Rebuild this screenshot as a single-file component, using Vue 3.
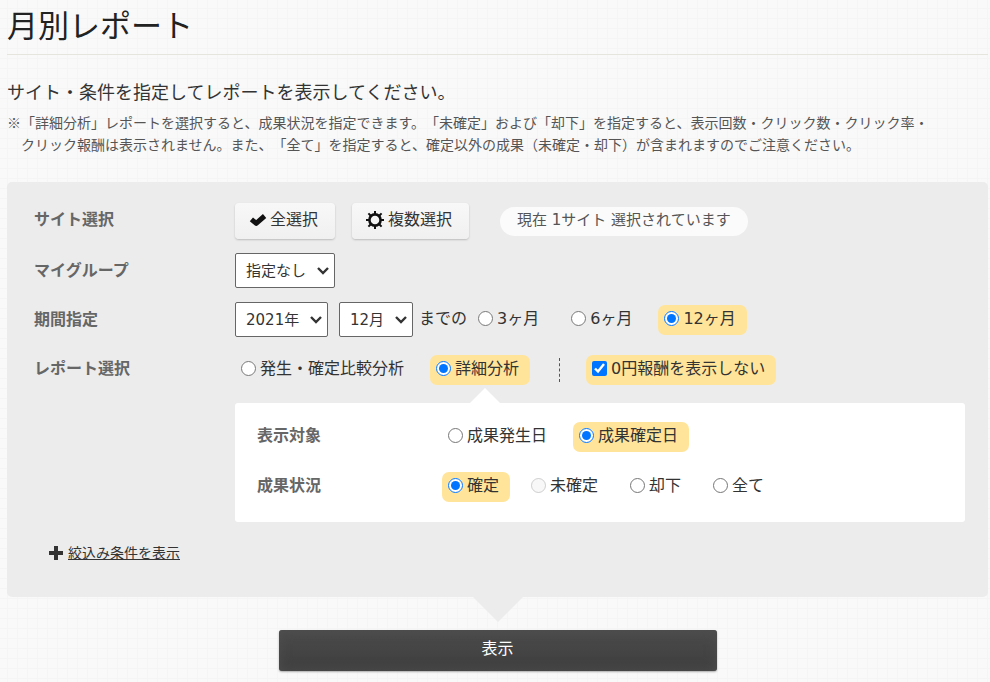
<script setup>
import { ref } from 'vue'

const group = ref('指定なし')
const year = ref('2021年')
const month = ref('12月')
const period = ref('12ヶ月')
const report = ref('詳細分析')
const hideZero = ref(true)
const target = ref('成果確定日')
const status = ref('確定')

const periods = ['3ヶ月', '6ヶ月', '12ヶ月']
const reports = ['発生・確定比較分析', '詳細分析']
const targets = ['成果発生日', '成果確定日']
const statuses = [
  { name: '確定' },
  { name: '未確定', disabled: true },
  { name: '却下' },
  { name: '全て' },
]
</script>

<template>
  <main class="page">
    <h1>月別レポート</h1>
    <p class="lead">サイト・条件を指定してレポートを表示してください。</p>
    <p class="note">
      ※「詳細分析」レポートを選択すると、成果状況を指定できます。「未確定」および「却下」を指定すると、表示回数・クリック数・クリック率・<br>クリック報酬は表示されません。また、「全て」を指定すると、確定以外の成果（未確定・却下）が含まれますのでご注意ください。
    </p>

    <form @submit.prevent>
      <section class="panel">
        <div class="row sites">
          <span class="name">サイト選択</span>
          <div class="controls">
            <button type="button" class="tool">
              <svg width="18" height="14" viewBox="0 0 18 14"><path d="M2.4 6.4 7.2 10.4 15.6 3" fill="none" stroke="#111" stroke-width="5" stroke-linejoin="round" /></svg>
              全選択
            </button>
            <button type="button" class="tool gear">
              <svg width="18" height="18" viewBox="0 0 18 18">
                <circle cx="9" cy="9" r="5.6" fill="none" stroke="#111" stroke-width="2.6" />
                <path d="M9 0v3M9 15v3M0 9h3M15 9h3M2.4 2.4l2.4 2.4M13.2 13.2l2.4 2.4M2.4 15.6l2.4-2.4M13.2 4.8l2.4-2.4" stroke="#111" stroke-width="2" />
              </svg>
              複数選択
            </button>
            <span class="count">現在 1サイト 選択されています</span>
          </div>
        </div>

        <div class="row group">
          <label class="name" for="group">マイグループ</label>
          <div class="controls">
            <div class="select">
              <select id="group" v-model="group"><option>指定なし</option></select>
              <svg width="12" height="8" viewBox="0 0 12 8"><path d="M1 1l5 5 5-5" fill="none" stroke="#333" stroke-width="2.4" /></svg>
            </div>
          </div>
        </div>

        <div class="row period">
          <span class="name">期間指定</span>
          <div class="controls">
            <div class="select">
              <select v-model="year" aria-label="年"><option>2021年</option></select>
              <svg width="12" height="8" viewBox="0 0 12 8"><path d="M1 1l5 5 5-5" fill="none" stroke="#333" stroke-width="2.4" /></svg>
            </div>
            <div class="select">
              <select v-model="month" aria-label="月"><option>12月</option></select>
              <svg width="12" height="8" viewBox="0 0 12 8"><path d="M1 1l5 5 5-5" fill="none" stroke="#333" stroke-width="2.4" /></svg>
            </div>
            <span class="until">までの</span>
            <div class="options">
              <label v-for="p in periods" :key="p" class="option" :class="{ on: period === p }">
                <input v-model="period" type="radio" name="period" :value="p">{{ p }}
              </label>
            </div>
          </div>
        </div>

        <div class="row report">
          <span class="name">レポート選択</span>
          <div class="controls">
            <div class="options">
              <label v-for="r in reports" :key="r" class="option" :class="{ on: report === r, pointed: r === '詳細分析' && report === r }">
                <input v-model="report" type="radio" name="report" :value="r">{{ r }}
              </label>
            </div>
            <span class="divider"></span>
            <label class="option" :class="{ on: hideZero }">
              <input v-model="hideZero" type="checkbox">0円報酬を表示しない
            </label>
          </div>
        </div>

        <div class="detail">
          <div class="detail-row">
            <span class="name">表示対象</span>
            <div class="options">
              <label v-for="t in targets" :key="t" class="option" :class="{ on: target === t }">
                <input v-model="target" type="radio" name="target" :value="t">{{ t }}
              </label>
            </div>
          </div>
          <div class="detail-row">
            <span class="name">成果状況</span>
            <div class="options">
              <label v-for="s in statuses" :key="s.name" class="option" :class="{ on: status === s.name }">
                <input v-model="status" type="radio" name="status" :value="s.name" :disabled="s.disabled">{{ s.name }}
              </label>
            </div>
          </div>
        </div>

        <div class="more">
          <svg width="14" height="14" viewBox="0 0 14 14"><path d="M7 0v14M0 7h14" stroke="#333" stroke-width="4" /></svg>
          <a href="#">絞込み条件を表示</a>
        </div>
      </section>

      <button type="submit" class="submit">表示</button>
    </form>
  </main>
</template>

<style>
body {
  background-color: #f9f9f9;
  background-image:
    linear-gradient(to right, #f5f5f5 1px, transparent 1px),
    linear-gradient(to bottom, #f5f5f5 1px, transparent 1px);
  background-size: 10px 10px;
  background-position: 7px 8px;
}
</style>

<style scoped>
.page {
  padding: 0 2px 11px 7px;
  color: #333;
  font: 16px/24px "DejaVu Sans", "Noto Sans CJK JP", sans-serif;
}

h1, .lead, .note {
  margin: 0;
  font-family: "Noto Sans CJK JP", sans-serif;
  font-weight: 400;
  text-spacing-trim: space-all;
}

h1 {
  padding-bottom: 6px;
  border-bottom: 1px solid #e5e5de;
  color: #222;
  font-size: 31px;
  line-height: 48px;
}

.lead {
  margin-top: 23px;
  font-size: 18px;
  line-height: 26px;
}

.note {
  margin: 7px 0 27px;
  padding-left: 14px;
  color: #555;
  font-size: 14px;
  line-height: 22px;
  text-indent: -14px;
}

.panel {
  position: relative;
  padding: 21px 23px 32px 27px;
  border-radius: 5px;
  background: #ececec;
}

.panel::after {
  content: "";
  position: absolute;
  top: 100%;
  left: 50%;
  border: 25px solid transparent;
  border-top-color: #ececec;
  border-bottom: 0;
  transform: translateX(-50%);
}

.row {
  display: grid;
  grid-template-columns: 201px 1fr;
  align-items: center;
}

.sites { margin-bottom: 14px; }
.group { margin-bottom: 14px; }
.period { margin-bottom: 18px; }
.report { margin-bottom: 18px; }

.name {
  padding-bottom: 3px;
  color: #666;
  font-weight: 700;
}

.group .name,
.period .name {
  padding-bottom: 0;
}

.controls, .options {
  display: flex;
  align-items: center;
}

.options { gap: 15px; }

.tool {
  display: flex;
  align-items: center;
  gap: 3px;
  height: 36px;
  margin-right: 17px;
  padding: 0 17px 2px 14px;
  border: 0;
  border-radius: 4px;
  background: linear-gradient(#f8f8f8, #f0f0f0);
  box-shadow: 0 1px 2px #bbb;
  color: #333;
  font: inherit;
}

.gear {
  gap: 4px;
}

.count {
  margin-left: 14px;
  padding: 0 17px 3px;
  border-radius: 15px;
  background: #fbfbfb;
  color: #555;
  font-size: 15px;
  line-height: 26px;
}

.select {
  display: grid;
  align-items: center;
  margin-right: 11px;
}

.select > * {
  grid-area: 1 / 1;
}

.select svg {
  justify-self: end;
  margin-right: 6px;
  pointer-events: none;
}

select {
  appearance: none;
  height: 35px;
  padding: 0 27px 0 10px;
  border: 1px solid #666;
  border-radius: 2px;
  background-color: #fff;
  color: #333;
  font-family: inherit;
  font-size: 15px;
}

.until {
  margin-left: -5px;
  padding: 0 5px 2px 0;
}

.option {
  position: relative;
  display: flex;
  align-items: center;
  gap: 4px;
  padding: 0 11px 3px 6px;
  border-radius: 7px;
  line-height: 27px;
}

.option.on { background: #ffe499; }

.option input {
  width: 15px;
  height: 15px;
  margin: 0;
}

.pointed::after {
  content: "";
  position: absolute;
  top: 33px;
  left: 40px;
  border: 15px solid transparent;
  border-top: 0;
  border-bottom-color: #fff;
}

.divider {
  height: 24px;
  margin: 0 26px 0 29px;
  border-left: 1px dashed #555;
}

.detail {
  display: grid;
  gap: 20px;
  margin-left: 201px;
  padding: 19px 22px 20px;
  border-radius: 3px;
  background: #fff;
}

.detail-row {
  display: grid;
  grid-template-columns: 185px 1fr;
  align-items: center;
}

.more {
  display: flex;
  align-items: center;
  gap: 5px;
  margin: 19px 0 0 15px;
  font-size: 14px;
}

.more a {
  color: #333;
}

.submit {
  display: block;
  width: 438px;
  max-width: 100%;
  height: 41px;
  margin: 33px auto 0;
  padding: 0 0 3px;
  border: 0;
  border-radius: 3px;
  background: linear-gradient(#4b4b4b, #3e3e3e);
  box-shadow: 0 1px 2px #aaa, inset 0 0 12px #4f4f4f;
  color: #fff;
  font: inherit;
}
</style>
